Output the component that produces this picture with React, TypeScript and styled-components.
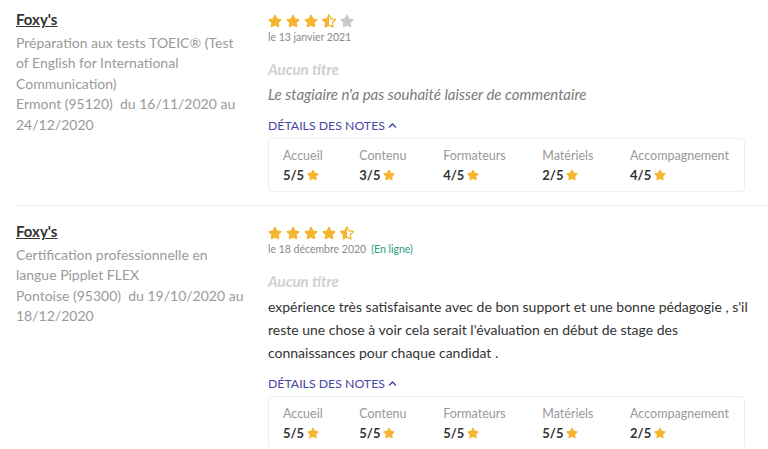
import React from "react";
import styled, { createGlobalStyle } from "styled-components";
import { FaStar, FaStarHalfAlt, FaChevronUp } from "react-icons/fa";

const Global = createGlobalStyle`
  html, body { margin: 0; padding: 0; background: #fff; }
  body { font-family: Lato, "Open Sans", sans-serif; color: #333; }
`;

const List = styled.div`
  margin-left: 15px;
`;

const Row = styled.div<{ $first?: boolean }>`
  display: flex;
  padding: ${(p) => (p.$first ? "8px" : "14px")} 8px 13px 1px;
  border-bottom: 1px solid #ececec;
`;

const Left = styled.div`
  width: 231px;
  flex-shrink: 0;
  margin-right: 21px;
`;

const OrgLink = styled.a`
  display: block;
  font-size: 15px;
  font-weight: 700;
  line-height: 22px;
  color: #333;
  text-decoration: underline;
`;

const Desc = styled.div`
  margin-top: 2.5px;
  font-size: 14px;
  line-height: 20.5px;
  color: #9a9a9a;
`;

const Right = styled.div`
  flex: 1;
  min-width: 0;
`;

const Stars = styled.div`
  display: flex;
  gap: 4px;
  height: 16px;
  align-items: center;
  margin-top: 5px;
`;

const StarIcon = styled.span<{ $off?: boolean }>`
  display: flex;
  color: ${(p) => (p.$off ? "#c9c9c9" : "#f5b52e")};
  font-size: 14px;
`;

const DateLine = styled.div`
  margin-top: 0;
  font-size: 10.5px;
  line-height: 16px;
  color: #8a8a8a;
`;

const Online = styled.span`
  margin-left: 5px;
  color: #2c9a7e;
`;

const Title = styled.div`
  margin-top: 14px;
  font-size: 15px;
  line-height: 20px;
  font-style: italic;
  font-weight: 700;
  color: #cfcfcf;
`;

const Comment = styled.div<{ $empty?: boolean }>`
  margin-top: 4px;
  font-size: ${(p) => (p.$empty ? "15px" : "14px")};
  line-height: 23px;
  font-style: ${(p) => (p.$empty ? "italic" : "normal")};
  color: ${(p) => (p.$empty ? "#7a7a7a" : "#333")};
`;

const DetailsToggle = styled.div`
  margin-top: 11px;
  display: flex;
  align-items: center;
  gap: 3px;
  font-size: 12.3px;
  line-height: 18px;
  color: #4646a3;
  svg { font-size: 9px; margin-top: -2px; }
`;

const Card = styled.div`
  margin: 3px 15px 0 0;
  border: 1px solid #efefef;
  border-radius: 4px;
  padding: 8px 15px 7px 14px;
  display: flex;
  justify-content: space-between;
`;

const Crit = styled.div`
  display: flex;
  flex-direction: column;
`;

const CritLabel = styled.div`
  font-size: 12.5px;
  line-height: 18px;
  color: #999;
`;

const CritValue = styled.div`
  margin-top: 1px;
  display: flex;
  align-items: center;
  gap: 3px;
  font-size: 13px;
  font-weight: 700;
  line-height: 18px;
  color: #333;
  svg { color: #f5b52e; font-size: 12px; }
`;

type Review = {
  org: string;
  desc: string[];
  stars: number; // in halves
  date: string;
  online?: boolean;
  comment: string;
  empty?: boolean;
  notes: number[];
};

const labels = ["Accueil", "Contenu", "Formateurs", "Matériels", "Accompagnement"];

const reviews: Review[] = [
  {
    org: "Foxy's",
    desc: [
      "Préparation aux tests TOEIC® (Test of English for International Communication)",
      "Ermont (95120)\u00a0 du 16/11/2020 au 24/12/2020",
    ],
    stars: 7,
    date: "le 13 janvier 2021",
    comment: "Le stagiaire n'a pas souhaité laisser de commentaire",
    empty: true,
    notes: [5, 3, 4, 2, 4],
  },
  {
    org: "Foxy's",
    desc: [
      "Certification professionnelle en langue Pipplet FLEX",
      "Pontoise (95300)\u00a0 du 19/10/2020 au 18/12/2020",
    ],
    stars: 9,
    date: "le 18 décembre 2020",
    online: true,
    comment:
      "expérience très satisfaisante avec de bon support et une bonne pédagogie , s'il reste une chose à voir cela serait l'évaluation en début de stage des connaissances pour chaque candidat .",
    notes: [5, 5, 5, 5, 2],
  },
];

function StarRow({ halves }: { halves: number }) {
  const items = [];
  for (let i = 0; i < 5; i++) {
    const v = halves - i * 2;
    if (v >= 2) items.push(<StarIcon key={i}><FaStar /></StarIcon>);
    else if (v === 1) items.push(<StarIcon key={i}><FaStarHalfAlt /></StarIcon>);
    else items.push(<StarIcon key={i} $off><FaStar /></StarIcon>);
  }
  return <Stars>{items}</Stars>;
}

export default function App() {
  return (
    <>
      <Global />
      <List>
        {reviews.map((r, idx) => (
          <Row key={idx} $first={idx === 0}>
            <Left>
              <OrgLink href="#">{r.org}</OrgLink>
              <Desc>
                {r.desc.map((d, i) => (
                  <div key={i}>{d}</div>
                ))}
              </Desc>
            </Left>
            <Right>
              <StarRow halves={r.stars} />
              <DateLine>
                {r.date}
                {r.online && <Online>(En ligne)</Online>}
              </DateLine>
              <Title>Aucun titre</Title>
              <Comment $empty={r.empty}>{r.comment}</Comment>
              <DetailsToggle>
                DÉTAILS DES NOTES
                <FaChevronUp />
              </DetailsToggle>
              <Card>
                {labels.map((l, i) => (
                  <Crit key={l}>
                    <CritLabel>{l}</CritLabel>
                    <CritValue>
                      {r.notes[i]}/5
                      <FaStar />
                    </CritValue>
                  </Crit>
                ))}
              </Card>
            </Right>
          </Row>
        ))}
      </List>
    </>
  );
}
